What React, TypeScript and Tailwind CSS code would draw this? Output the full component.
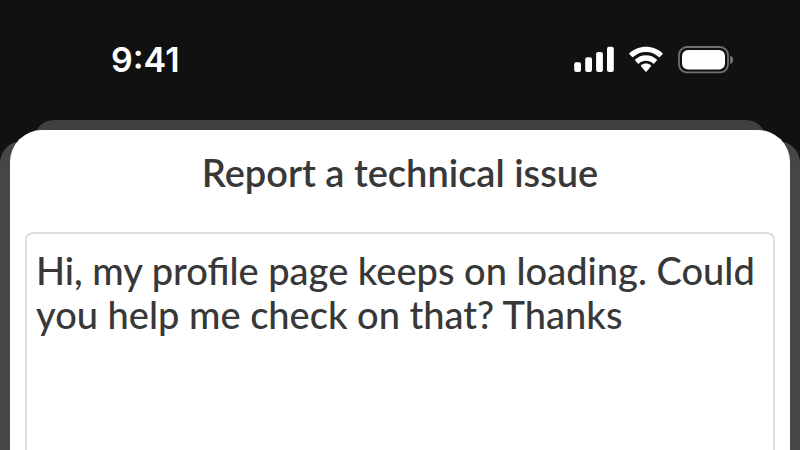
import React from 'react';

const SignalIcon = () => (
  <svg width="40" height="28" viewBox="0 0 40 28" fill="#fff" aria-hidden="true">
    <rect x="0.2" y="16.2" width="6.8" height="9.8" rx="2" />
    <rect x="11.2" y="11.2" width="6.8" height="14.8" rx="2" />
    <rect x="22.1" y="6" width="6.8" height="20" rx="2" />
    <rect x="33" y="0.8" width="6.8" height="25.2" rx="2" />
  </svg>
);

const WifiIcon = () => (
  <svg width="34" height="28" viewBox="0 0 34 28" fill="#fff" aria-hidden="true">
    <path d="M17 6.1C21.9 6.1 26.4 8 29.8 11.1C30.1 11.4 30.5 11.4 30.8 11.1L33.6 8.2C33.9 7.9 33.9 7.5 33.6 7.2C29.3 3.1 23.4 0.7 17 0.7C10.6 0.7 4.7 3.1 0.4 7.2C0.1 7.5 0.1 7.9 0.4 8.2L3.2 11.1C3.5 11.4 3.9 11.4 4.2 11.1C7.6 8 12.1 6.1 17 6.1Z" />
    <path d="M17 14.7C19.7 14.7 22.2 15.7 24.1 17.4C24.4 17.7 24.8 17.7 25.1 17.4L27.8 14.4C28.1 14.1 28.1 13.7 27.8 13.4C24.9 10.8 21.1 9.2 17 9.2C12.9 9.2 9.1 10.8 6.2 13.4C5.9 13.7 5.9 14.1 6.2 14.4L8.9 17.4C9.2 17.7 9.6 17.7 9.9 17.4C11.8 15.7 14.3 14.7 17 14.7Z" />
    <path d="M22 20.3C22.3 20 22.3 19.6 22 19.3C20.6 18.2 18.9 17.6 17 17.6C15.1 17.6 13.4 18.2 12 19.3C11.7 19.6 11.7 20 12 20.3L16.4 25.4C16.8 25.8 17.2 25.8 17.6 25.4Z" />
  </svg>
);

const BatteryIcon = () => (
  <svg width="56" height="28" viewBox="0 0 56 28" aria-hidden="true">
    <rect x="1" y="1" width="49" height="25.4" rx="8" fill="none" stroke="#717171" strokeWidth="1.8" />
    <rect x="4" y="4" width="43" height="19.4" rx="6" fill="#fff" />
    <path d="M52.2 9.6V18C54 17.2 55.2 15.7 55.2 13.8C55.2 11.9 54 10.4 52.2 9.6Z" fill="#7a7a7a" />
  </svg>
);

export default function App() {
  return (
    <div className="flex min-h-screen flex-col overflow-hidden bg-[#111111]">
      <header className="flex h-[120px] items-center justify-between pr-[66px] pl-[111px]">
        <time className="font-['Inter',sans-serif] text-[34px] leading-10 font-semibold text-white">9:41</time>
        <div className="flex items-center gap-[15px]">
          <SignalIcon />
          <WifiIcon />
          <BatteryIcon />
        </div>
      </header>

      {/* Sheets share one grid cell, the front one last */}
      <div className="grid flex-1 grid-cols-1 font-['Lato',sans-serif] text-[#383838] *:[grid-area:1/1]">
        <div className="mx-[34px] rounded-t-[20px] bg-[#404040]" />
        <div className="mt-[21px] rounded-t-[22px] bg-[#464646]" />
        <main className="mx-[10px] mt-[10px] flex flex-col rounded-t-[32px] bg-white px-[15px] pt-5">
          <h1 className="text-center text-[38px] leading-11 font-semibold">
            <label htmlFor="issue">Report a technical issue</label>
          </h1>
          <textarea
            id="issue"
            className="mt-[38px] block min-h-[200px] w-full flex-1 resize-none rounded-t-lg border-2 border-b-0 border-[#dedede] bg-white px-[9px] py-[14px] text-[38px] leading-11 font-medium outline-none"
            defaultValue="Hi, my profile page keeps on loading. Could you help me check on that? Thanks"
          />
        </main>
      </div>
    </div>
  );
}
